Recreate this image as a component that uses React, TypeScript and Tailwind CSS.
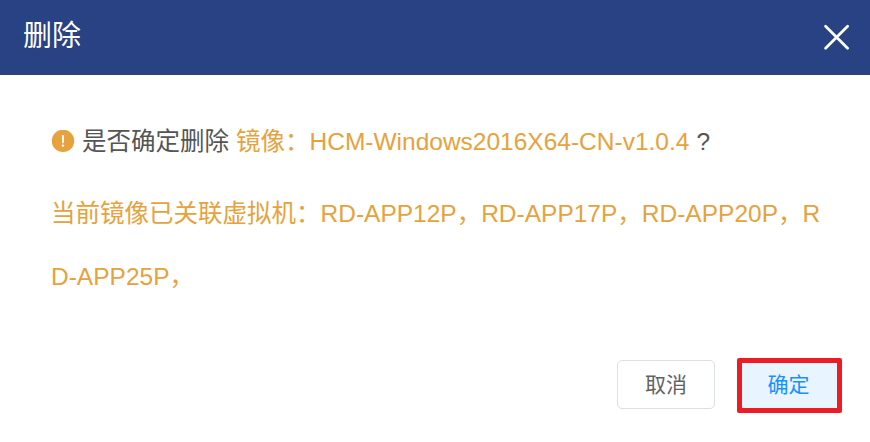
export default function App() {
  return (
    <div className="flex h-[442px] w-[870px] flex-col overflow-hidden bg-white font-['Liberation_Sans','Noto_Sans_CJK_SC',sans-serif]">
      <header className="flex h-[75px] shrink-0 items-center justify-between bg-[#284283] pr-[20px] pl-[23px] text-white">
        <h1 className="pb-[2px] text-[29px] leading-[73px]">删除</h1>
        <button aria-label="关闭" className="pb-px">
          <svg width="27" height="26" viewBox="0 0 27 26" fill="none" stroke="currentColor" strokeWidth="2.7" strokeLinecap="round">
            <path d="M2.6 2.2 24.6 24.2M24.6 2.2 2.6 24.2" />
          </svg>
        </button>
      </header>
      <main className="flex flex-1 flex-col pt-[35px] pl-[51px] text-[24.5px] leading-[63px] whitespace-nowrap text-[#e6a23c]">
        <p className="flex items-center">
          <svg className="mr-[7px] shrink-0" width="24" height="24" viewBox="0 0 24 24">
            <circle cx="12" cy="10.9" r="11.2" fill="#e6a23c" />
            <path d="M10.9 5.2h2.2l-.3 8h-1.6z" fill="white" />
            <circle cx="12" cy="15.6" r="1.2" fill="white" />
          </svg>
          <span className="text-[#555]">是否确定删除</span>
          <span className="ml-[7px]">镜像：HCM-Windows2016X64-CN-v1.0.4</span>
          <span className="ml-[7px] text-[#555]">?</span>
        </p>
        <p className="mt-[9px]">当前镜像已关联虚拟机：RD-APP12P，RD-APP17P，RD-APP20P，R<br />D-APP25P，</p>
      </main>
      <footer className="flex h-[84px] shrink-0 items-start justify-end gap-[22px] pr-[28px] text-[21px]">
        <button className="mt-[2px] h-[49px] w-[98px] rounded-[5px] border border-[#dcdfe6] text-[#606266]">取消</button>
        <button className="h-[55px] w-[105px] rounded-[2px] border-[5px] border-[#ed1c24] bg-[#e8f4ff] pr-[2px] pb-[2px] text-[#1890ff]">确定</button>
      </footer>
    </div>
  );
}
